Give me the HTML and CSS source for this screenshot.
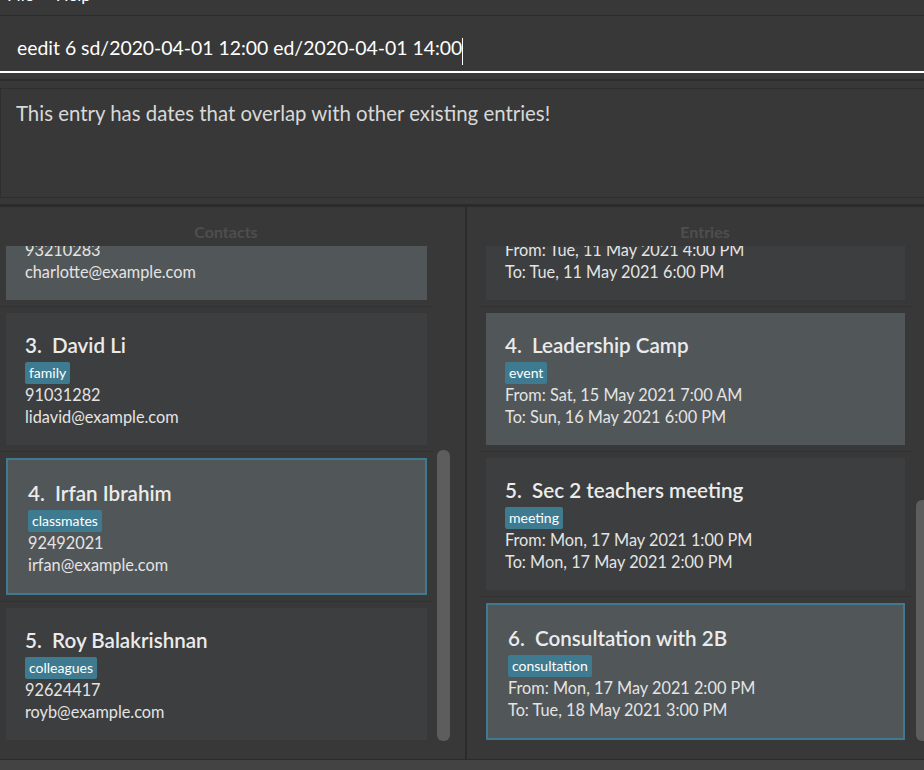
FILE: index.html
```html
<!DOCTYPE html>
<html lang="en">
<head>
<meta charset="utf-8">
<title>AddressBook</title>
<link rel="stylesheet" href="styles.css">
</head>
<body>
<div class="app">
  <div class="menubar">
    <span class="menu-item">File</span>
    <span class="menu-item">Help</span>
  </div>
  <div class="command">
    <span class="cmd-text">eedit 6 sd/2020-04-01 12:00 ed/2020-04-01 14:00</span><span class="caret"></span>
  </div>
  <div class="sep-a"></div>
  <div class="result">This entry has dates that overlap with other existing entries!</div>
  <div class="sep-b"></div>
  <div class="panes">
    <section class="pane pane-left">
      <div class="pane-title">Contacts</div>
      <div class="list-row">
        <div class="list">
          <div class="list-inner">
            <div class="cell odd"><div class="card">
              <div class="name">2.  Charlotte Oliveiro</div>
              <div class="tags"><span class="tag">neighbours</span></div>
              <div class="line">93210283</div>
              <div class="line">charlotte@example.com</div>
            </div></div>
            <div class="cell even"><div class="card">
              <div class="name">3.  David Li</div>
              <div class="tags"><span class="tag">family</span></div>
              <div class="line">91031282</div>
              <div class="line">lidavid@example.com</div>
            </div></div>
            <div class="cell odd"><div class="card selected">
              <div class="name">4.  Irfan Ibrahim</div>
              <div class="tags"><span class="tag">classmates</span></div>
              <div class="line">92492021</div>
              <div class="line">irfan@example.com</div>
            </div></div>
            <div class="cell even"><div class="card">
              <div class="name">5.  Roy Balakrishnan</div>
              <div class="tags"><span class="tag">colleagues</span></div>
              <div class="line">92624417</div>
              <div class="line">royb@example.com</div>
            </div></div>
          </div>
        </div>
        <div class="scrolltrack"><div class="thumb thumb-left"></div></div>
      </div>
    </section>
    <div class="divider"></div>
    <section class="pane pane-right">
      <div class="pane-title">Entries</div>
      <div class="list-row">
        <div class="list">
          <div class="list-inner">
            <div class="cell even"><div class="card">
              <div class="name">3.  Parent teacher meeting</div>
              <div class="tags"><span class="tag">meeting</span></div>
              <div class="line">From: Tue, 11 May 2021 4:00 PM</div>
              <div class="line">To: Tue, 11 May 2021 6:00 PM</div>
            </div></div>
            <div class="cell odd"><div class="card">
              <div class="name">4.  Leadership Camp</div>
              <div class="tags"><span class="tag">event</span></div>
              <div class="line">From: Sat, 15 May 2021 7:00 AM</div>
              <div class="line">To: Sun, 16 May 2021 6:00 PM</div>
            </div></div>
            <div class="cell even"><div class="card">
              <div class="name">5.  Sec 2 teachers meeting</div>
              <div class="tags"><span class="tag">meeting</span></div>
              <div class="line">From: Mon, 17 May 2021 1:00 PM</div>
              <div class="line">To: Mon, 17 May 2021 2:00 PM</div>
            </div></div>
            <div class="cell odd"><div class="card selected">
              <div class="name">6.  Consultation with 2B</div>
              <div class="tags"><span class="tag">consultation</span></div>
              <div class="line">From: Mon, 17 May 2021 2:00 PM</div>
              <div class="line">To: Tue, 18 May 2021 3:00 PM</div>
            </div></div>
          </div>
        </div>
        <div class="scrolltrack"><div class="thumb thumb-right"></div></div>
      </div>
    </section>
  </div>
  <div class="statusbar"></div>
</div>
</body>
</html>
```

FILE: styles.css
```css
* { box-sizing: border-box; }
html, body {
  margin: 0;
  padding: 0;
  background: #383838;
  font-family: "Lato", "Liberation Sans", sans-serif;
}
.app {
  width: 924px;
  height: 770px;
  overflow: hidden;
  background: #383838;
  display: flex;
  flex-direction: column;
}
.menubar {
  height: 16px;
  flex-shrink: 0;
  border-bottom: 1px solid #2b2b2b;
  overflow: hidden;
  display: flex;
  gap: 22px;
  padding-left: 7px;
}
.menu-item {
  color: #ffffff;
  font-size: 17px;
  line-height: 20px;
  margin-top: -15px;
}
.command {
  height: 57px;
  flex-shrink: 0;
  padding: 19px 0 0 17px;
  border-bottom: 2px solid #ffffff;
  display: flex;
  align-items: flex-start;
}
.cmd-text {
  color: #ffffff;
  font-size: 19.4px;
  line-height: 26px;
  white-space: pre;
}
.caret {
  width: 1px;
  height: 27px;
  margin-top: 3px;
  background: #ffffff;
}
.sep-a {
  flex-shrink: 0;
  height: 10px;
  margin-top: 6px;
  border-top: 2px solid #2c2c2c;
  border-bottom: 1px solid #2e2e2e;
}
.result {
  flex-shrink: 0;
  height: 109px;
  border-left: 1px solid #2e2e2e;
  border-bottom: 1px solid #2e2e2e;
  padding: 11px 0 0 15px;
  color: #d8d8d8;
  font-size: 20.4px;
  line-height: 26px;
}
.sep-b {
  flex-shrink: 0;
  height: 9px;
  border-bottom: 3px solid #2b2b2b;
}
.panes {
  flex-shrink: 0;
  height: 552px;
  display: flex;
  overflow: hidden;
}
.pane {
  display: flex;
  flex-direction: column;
  overflow: hidden;
}
.pane-left { width: 465px; flex-shrink: 0; }
.pane-right { flex: 1; padding-left: 12px; }
.divider {
  width: 2px;
  flex-shrink: 0;
  background: #2b2b2b;
}
.pane-title {
  height: 39px;
  flex-shrink: 0;
  padding-top: 15px;
  line-height: 20px;
  font-size: 16px;
  font-weight: 700;
  color: #4e4e4e;
  text-align: center;
}
.pane-left .pane-title { width: 452px; }
.pane-right .pane-title { padding-left: 7px; width: 445px; }
.list-row {
  height: 499px;
  display: flex;
  flex-shrink: 0;
}
.list {
  width: 433px;
  flex-shrink: 0;
  overflow: hidden;
}
.list-inner { margin-top: -84px; }
.cell {
  padding: 6px;
  border-bottom: 1px solid #313131;
}
.pane-right .cell { padding: 6px 7px; }
.card {
  height: 132px;
  padding: 19px 19px 0;
  color: #e4e4e4;
}
.odd .card { background: #515658; }
.even .card { background: #3c3e3f; }
.card.selected {
  height: 137px;
  border: 2px solid #3e7b91;
  padding: 20px 20px 0;
}
.name {
  font-size: 20.6px;
  font-weight: 600;
  line-height: 26px;
  white-space: pre;
  color: #ebebeb;
}
.tags {
  margin-top: 4px;
  height: 22px;
  display: flex;
}
.tag {
  display: inline-block;
  height: 22px;
  line-height: 22px;
  padding: 0 4px;
  border-radius: 2px;
  background: #3e7b91;
  color: #ffffff;
  font-size: 14px;
}
.line {
  font-size: 16.3px;
  line-height: 22px;
  white-space: pre;
}
.scrolltrack {
  width: 13px;
  flex-shrink: 0;
  margin-left: 4px;
}
.thumb {
  width: 13px;
  border-radius: 6px;
  background: #5d5d5d;
}
.thumb-left { margin-top: 204px; height: 291px; }
.thumb-right { margin-top: 254px; height: 241px; }
.statusbar {
  flex: 1;
  border-top: 1px solid #2b2b2b;
  background: #434343;
}
```
